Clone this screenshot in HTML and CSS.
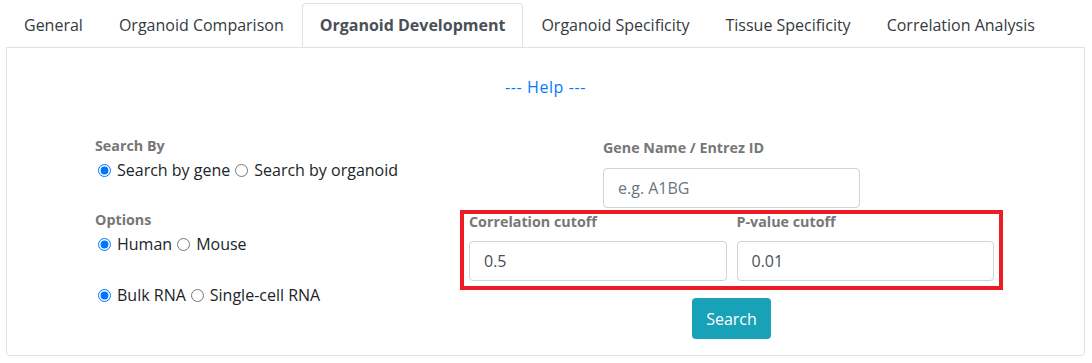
FILE: index.html
```html
<!DOCTYPE html>
<html lang="en">
<head>
<meta charset="utf-8">
<title>Organoid Development</title>
<link rel="stylesheet" href="styles.css">
</head>
<body>
<nav class="tabs">
  <a class="tab">General</a>
  <a class="tab">Organoid Comparison</a>
  <a class="tab active">Organoid Development</a>
  <a class="tab">Organoid Specificity</a>
  <a class="tab">Tissue Specificity</a>
  <a class="tab">Correlation Analysis</a>
</nav>
<div class="pane">
  <div class="help"><a class="help-link">--- Help ---</a></div>
  <div class="form">
    <div class="left">
      <div class="label">Search By</div>
      <div class="radios">
        <label class="radio"><input type="radio" name="by" checked>Search by gene</label>
        <label class="radio"><input type="radio" name="by">Search by organoid</label>
      </div>
      <div class="label options">Options</div>
      <div class="radios">
        <label class="radio"><input type="radio" name="sp" checked>Human</label>
        <label class="radio"><input type="radio" name="sp">Mouse</label>
      </div>
      <div class="radios bulk">
        <label class="radio"><input type="radio" name="rna" checked>Bulk RNA</label>
        <label class="radio"><input type="radio" name="rna">Single-cell RNA</label>
      </div>
    </div>
    <div class="right">
      <div class="gene">
        <div class="label">Gene Name / Entrez ID</div>
        <input class="field gene-field" type="text" placeholder="e.g. A1BG">
      </div>
      <div class="cutoffs">
        <div class="col">
          <div class="label cut-label">Correlation cutoff</div>
          <input class="field" type="text" value="0.5">
        </div>
        <div class="col">
          <div class="label cut-label">P-value cutoff</div>
          <input class="field" type="text" value="0.01">
        </div>
      </div>
      <div class="actions"><button class="btn" type="button">Search</button></div>
    </div>
  </div>
</div>
</body>
</html>
```

FILE: styles.css
```css
* { box-sizing: border-box; }

body {
  margin: 0;
  padding: 3px 7px 0 6px;
  font-family: "Open Sans", "Noto Sans", "Liberation Sans", sans-serif;
  font-size: 16px;
  color: #212529;
  background: #fff;
}

.tabs {
  display: flex;
  height: 44px;
}

.tab {
  display: block;
  padding: 9px 17px 10px;
  line-height: 24px;
  border: 1px solid transparent;
  border-bottom: 0;
  border-radius: 4px 4px 0 0;
  color: #343a40;
  white-space: nowrap;
}

.tab.active {
  border-color: #dee2e6;
  font-weight: 700;
  color: #495057;
  background: #fff;
}

.pane {
  height: 309px;
  border: 1px solid #dee2e6;
  border-radius: 0 0 4px 4px;
}

.help {
  padding-top: 27px;
  text-align: center;
  line-height: 24px;
}

.help-link {
  color: #007bff;
  letter-spacing: 0.6px;
}

.form {
  display: flex;
  margin-top: 37px;
}

.left {
  width: 365px;
  margin-left: 88px;
}

.label {
  font-weight: 700;
  font-size: 14.3px;
  line-height: 20px;
  color: #777;
}

.radios {
  display: flex;
  gap: 2px;
  margin-top: 2px;
  line-height: 24px;
}

.options { margin-top: 28px; }
.bulk { margin-top: 27px; }

.radio {
  display: inline-flex;
  align-items: center;
  white-space: nowrap;
}

.radio input {
  width: 13px;
  height: 13px;
  margin: 0 6px 0 3px;
}

.right {
  width: 543px;
}

.gene {
  width: 257px;
  margin: 2px auto 0;
}

.field {
  display: block;
  width: 100%;
  height: 40px;
  padding: 0 14px;
  border: 1px solid #ced4da;
  border-radius: 4px;
  font: inherit;
  color: #495057;
  background: #fff;
}

.field::placeholder { color: #6c757d; }

.gene-field { margin-top: 10px; }

.cutoffs {
  display: grid;
  grid-template-columns: 1fr 1fr;
  margin-top: 2px;
  border: 4px solid #ed1c24;
  padding-bottom: 5px;
}

.col { padding: 0 5px; }

.cut-label {
  line-height: 16px;
  margin-bottom: 11px;
}

.actions {
  display: flex;
  justify-content: center;
  margin-top: 8px;
}

.btn {
  height: 41px;
  padding: 0 14px;
  border: 0;
  border-radius: 4px;
  background: #17a2b8;
  color: #fff;
  font: inherit;
}
```
